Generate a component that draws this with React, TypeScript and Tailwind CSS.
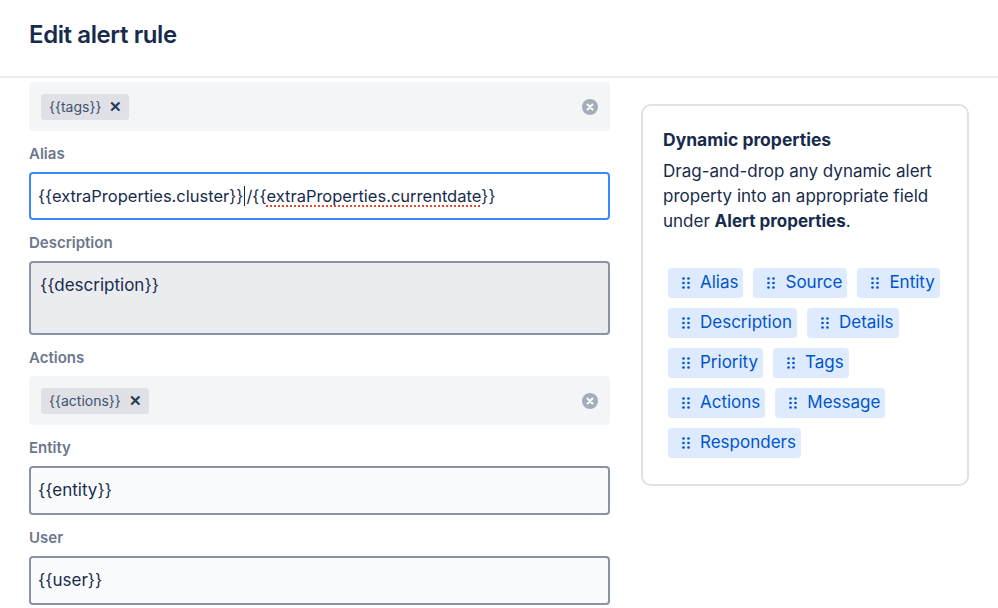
import React from "react"

const font = { fontFamily: "Inter, 'Noto Sans', sans-serif" }

function ClearIcon() {
  return (
    <svg width="16" height="16" viewBox="0 0 16 16" className="shrink-0">
      <circle cx="8" cy="8" r="8" fill="#a5adba" />
      <path d="M5.5 5.5l5 5M10.5 5.5l-5 5" stroke="#fff" strokeWidth="2" strokeLinecap="round" />
    </svg>
  )
}

function Grip() {
  return (
    <svg width="8" height="12" viewBox="0 0 8 12" className="shrink-0">
      {[1.5, 6, 10.5].map((y) =>
        [1.5, 6.5].map((x) => <circle key={`${x}-${y}`} cx={x} cy={y} r="1.3" fill="#0055cc" />)
      )}
    </svg>
  )
}

function TagField({ tag }: { tag: string }) {
  return (
    <div className="flex h-[49px] items-center justify-between rounded bg-[#f4f5f7] pl-3 pr-3">
      <span className="flex h-[26px] items-center gap-2 rounded-[3px] bg-[#dfe1e6] pl-2 pr-[7px] text-sm text-[#42526e]">
        {tag}
        <span className="text-[15px] font-bold leading-none text-[#253858]">✕</span>
      </span>
      <ClearIcon />
    </div>
  )
}

function Label({ children }: { children: React.ReactNode }) {
  return <div className="mb-2 mt-[13px] text-[15px] font-semibold leading-5 text-[#6b778c]">{children}</div>
}

const chips = [
  ["Alias", "Source", "Entity"],
  ["Description", "Details"],
  ["Priority", "Tags"],
  ["Actions", "Message"],
  ["Responders"],
]

export default function App() {
  return (
    <div className="h-[608px] w-[998px] overflow-hidden bg-white text-[#172b4d]" style={font}>
      <header className="flex h-[78px] items-start border-b-2 border-[#ebecf0] px-[29px] pt-[20px]">
        <h1 className="text-[24px] font-semibold leading-[30px] tracking-[-0.4px] text-[#172b4d]">Edit alert rule</h1>
      </header>

      <div className="flex gap-[31px] px-[29px]">
        <div className="w-[581px] pt-1">
          <TagField tag="{{tags}}" />

          <Label>Alias</Label>
          <div className="mb-px flex h-[48px] items-center rounded border-2 border-[#388bff] bg-white px-[7px] text-[16.5px]">
            <span>{"{{extraProperties.cluster}}"}</span>
            <span className="mx-[1px] inline-block h-[20px] w-[1px] bg-[#172b4d]" />
            <span>/{"{{"}</span>
            <span className="underline decoration-[#e34935] decoration-dotted decoration-2 underline-offset-[4px]">
              extraProperties.currentdate
            </span>
            <span>{"}}"}</span>
          </div>

          <Label>Description</Label>
          <div className="h-[74px] rounded border-2 border-[#8993a4] bg-[#ebecf0] px-[9px] pt-[10px] text-[17px]">
            {"{{description}}"}
          </div>

          <Label>Actions</Label>
          <TagField tag="{{actions}}" />

          <Label>Entity</Label>
          <div className="flex h-[49px] items-center rounded border-2 border-[#8993a4] bg-[#fafbfc] px-[7px] text-[17px]">
            {"{{entity}}"}
          </div>

          <Label>User</Label>
          <div className="flex h-[49px] items-center rounded border-2 border-[#8993a4] bg-[#fafbfc] px-[7px] text-[17px]">
            {"{{user}}"}
          </div>
        </div>

        <aside className="mt-[26px] h-[382px] w-[328px] rounded-[10px] border-2 border-[#dfe1e6] px-5 pt-[22px]">
          <h2 className="text-[17.5px] font-bold leading-6">Dynamic properties</h2>
          <p className="mt-[7px] text-[17px] leading-[25px]">
            Drag-and-drop any dynamic alert property into an appropriate field under{" "}
            <span className="font-bold">Alert properties</span>.
          </p>
          <div className="mt-[34px] flex flex-col gap-[10px] pl-[5px]">
            {chips.map((row, i) => (
              <div key={i} className="flex gap-[10px]">
                {row.map((c) => (
                  <span
                    key={c}
                    className="flex h-[30px] items-center gap-[10px] rounded-[4px] bg-[#deebff] pl-[14px] pr-[5px] text-[17px] text-[#0055cc]"
                  >
                    <Grip />
                    {c}
                  </span>
                ))}
              </div>
            ))}
          </div>
        </aside>
      </div>
    </div>
  )
}
